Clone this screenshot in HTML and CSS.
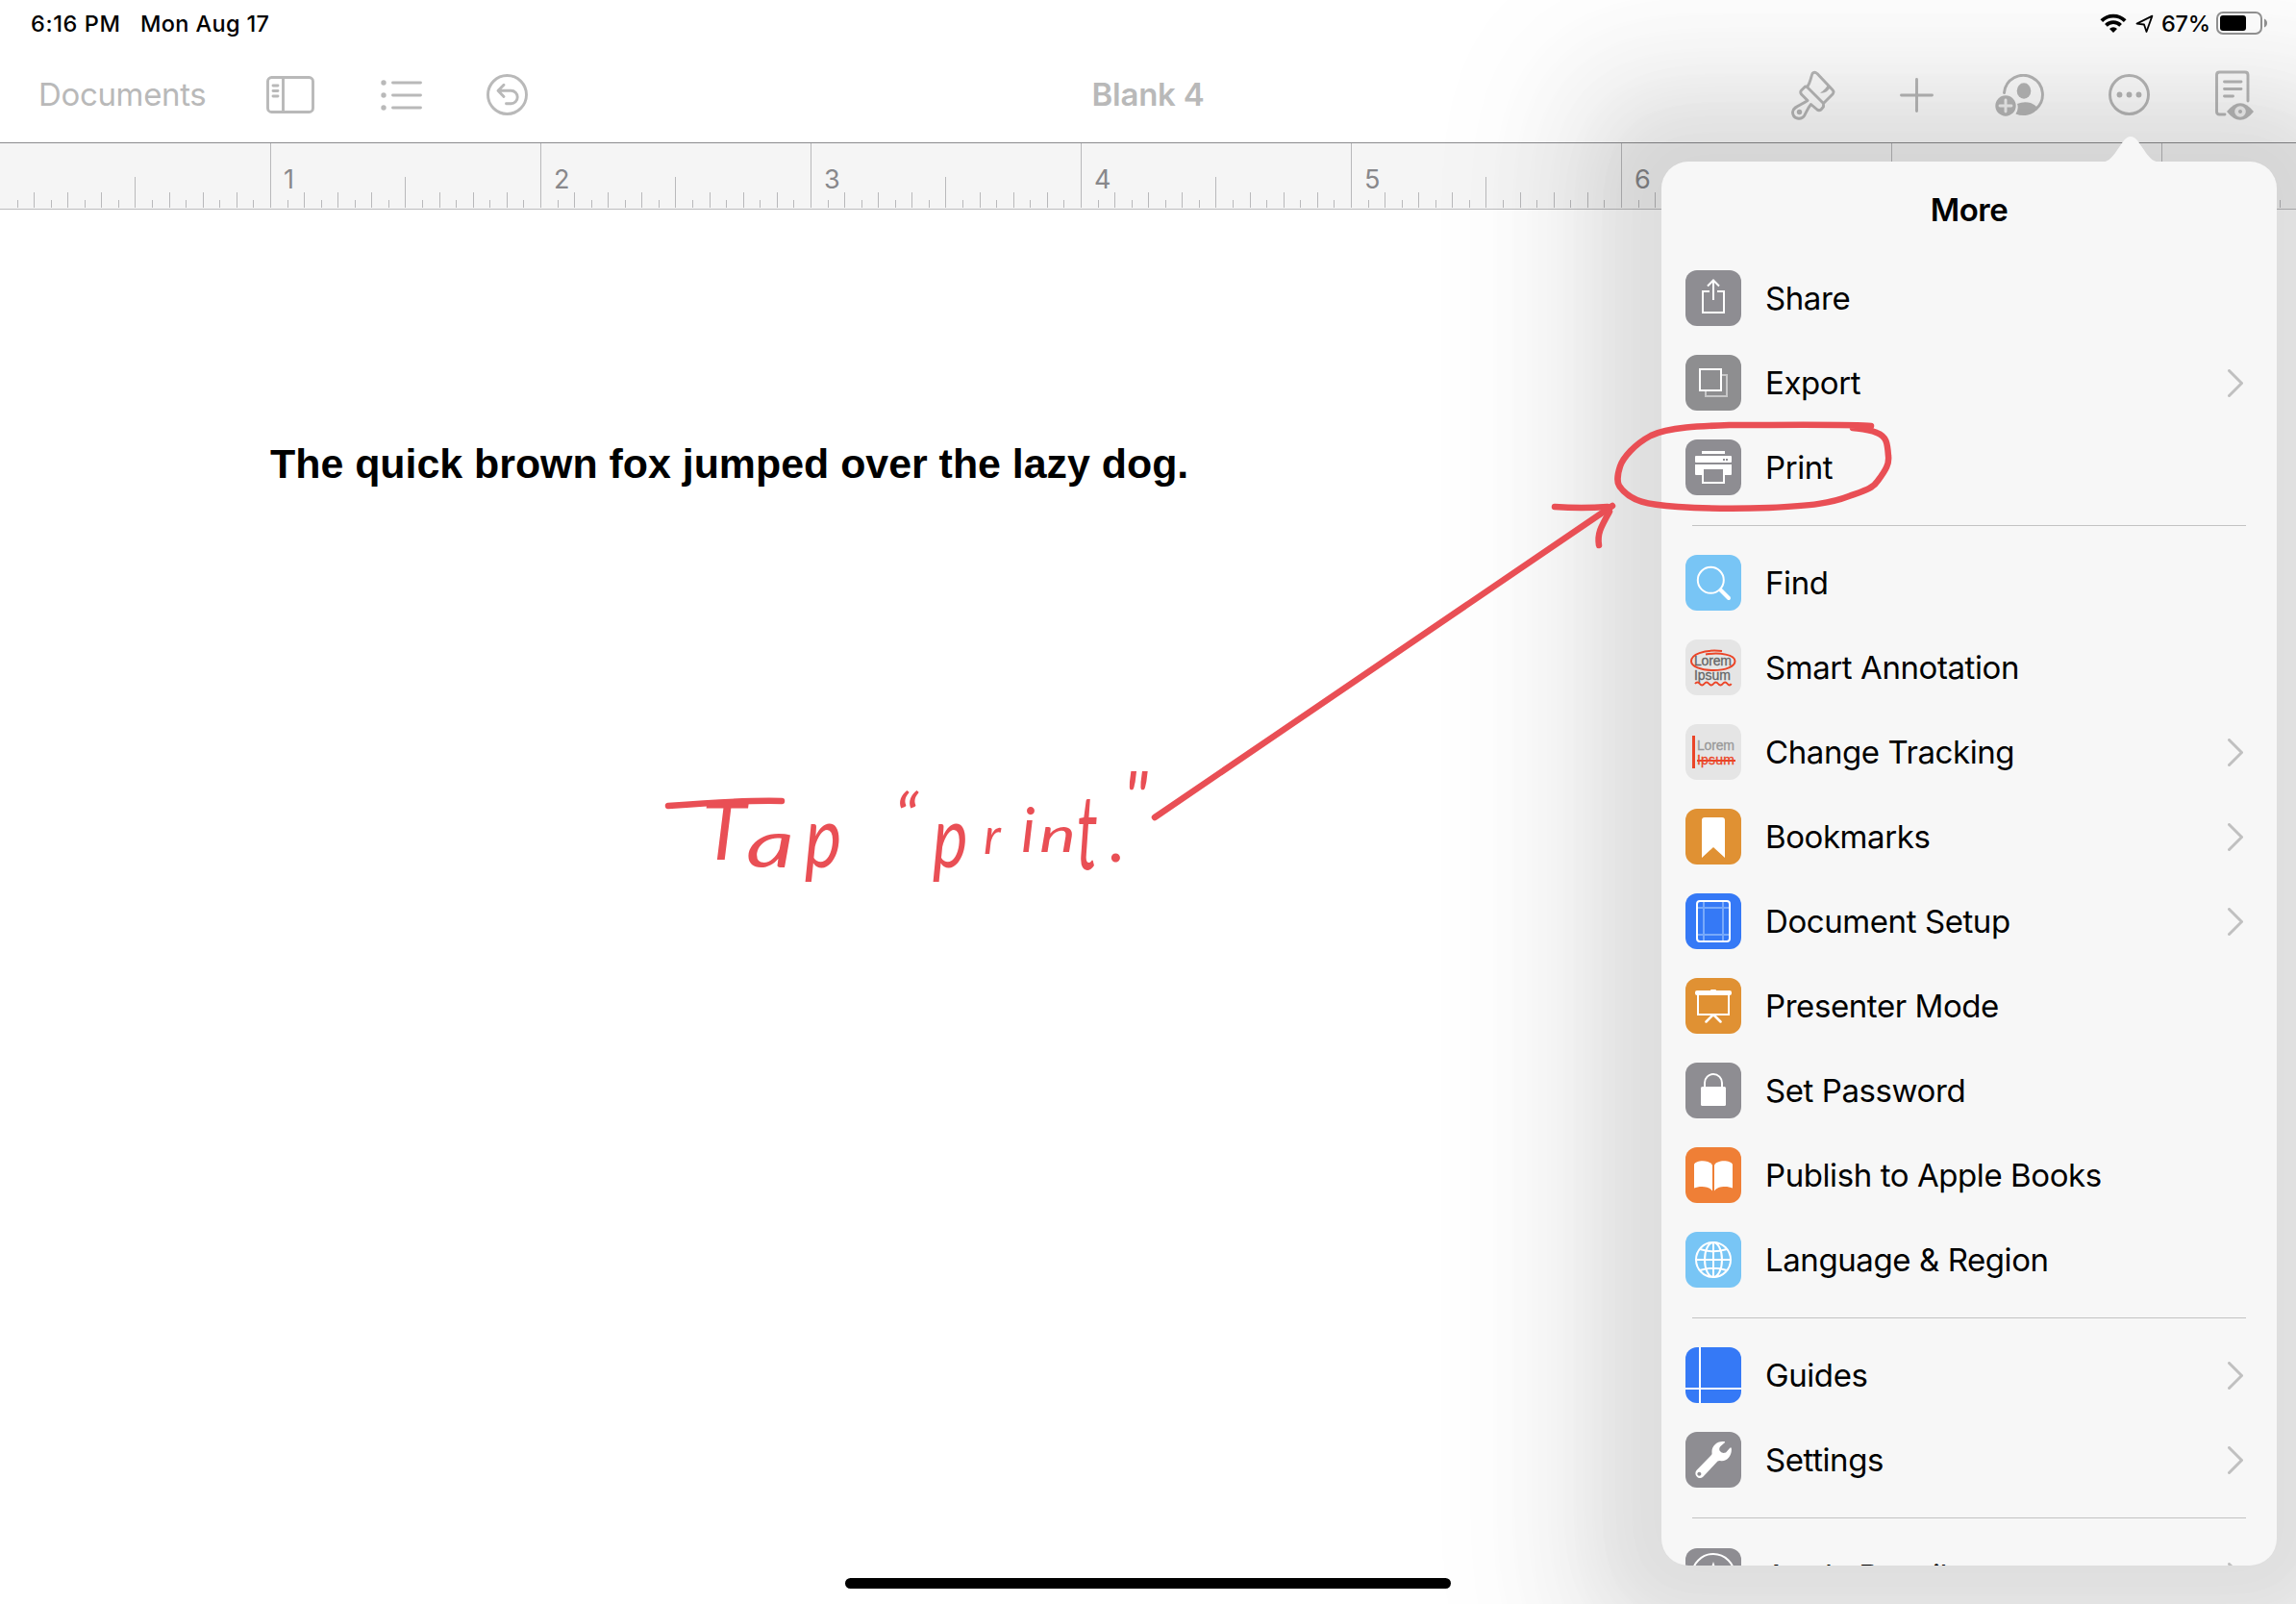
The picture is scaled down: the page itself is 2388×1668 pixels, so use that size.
FILE: index.html
```html
<!DOCTYPE html>
<html lang="en">
<head>
<meta charset="utf-8">
<title>Blank 4</title>
<link rel="stylesheet" href="styles.css">
</head>
<body>
<div class="screen">
  <div class="status">
    <span class="time">6:16 PM</span>
    <span class="date">Mon Aug 17</span>
    <svg class="wifi" width="28" height="21" viewBox="0 0 28 21"><g fill="none" stroke="#000" stroke-width="3.8"><path d="M1.8 7.6a17.3 17.3 0 0 1 24.4 0"/><path d="M6.4 12.3a10.8 10.8 0 0 1 15.2 0"/></g><path d="M14 20l-4-4a5.7 5.7 0 0 1 8 0z"/></svg>
    <svg class="loc" width="19" height="20" viewBox="0 0 19 20"><path d="M17.4 1.6L1.5 9.6 9 10.500 11.500 18z" fill="none" stroke="#000" stroke-width="1.8" stroke-linejoin="round"/></svg>
    <span class="pct">67%</span>
    <svg class="battery" width="54" height="24" viewBox="0 0 54 24"><rect x="1" y="1" width="46" height="22" rx="6" fill="none" stroke="#8f8f8f" stroke-width="2"/><rect x="4" y="4" width="27" height="16" rx="3"/><path d="M50 7.500q3 1.500 3 4.500t-3 4.500z" fill="#8f8f8f"/></svg>
  </div>

  <header class="toolbar">
    <nav class="tools-left">
      <span class="documents">Documents</span>
      <svg class="ico i-side" width="50" height="39" viewBox="0 0 50 39"><rect x="1.500" y="1.500" width="47" height="36" rx="4"/><path d="M17.500 1v37M7 10h5M7 15.500h5M7 21h5"/></svg>
      <svg class="ico i-list" width="43" height="32" viewBox="0 0 43 32"><path d="M12.500 3H41.500M12.500 16H41.500M12.500 29H41.500"/><g class="solid"><circle cx="3" cy="3" r="2.700"/><circle cx="3" cy="16" r="2.700"/><circle cx="3" cy="29" r="2.700"/></g></svg>
      <svg class="ico i-undo" width="43" height="43" viewBox="0 0 43 43"><circle cx="21.500" cy="21.500" r="20"/><path d="M18 11.300l-6 6 6 6.200M12.500 17.300H25.500a6.700 6.700 0 0 1 0 13.400H20.500"/></svg>
    </nav>
    <h1 class="doc-title">Blank 4</h1>
    <nav class="tools-right">
      <svg class="ico i-brush" width="46" height="52" viewBox="0 0 46 52"><path d="M22 3.500Q24 1 27 3.500L43 20.500Q45 22.500 43 25L33.500 34.500 16.500 17.500C20 13 20.500 7 22 3.500zM16.500 17.500L14.500 17 10.500 21Q9 22.500 10.500 25L17 31.500C11 36 1.500 38 1.500 43.500 1.500 51 10.500 52 13.500 47.500 16 43 17.500 39 20.500 35.500L27 41Q29 42.500 31 41L33.500 38V34.500"/><path class="solid" d="M38.500 14Q36 20 30 23.500 37 24.500 40.500 18z"/><circle class="solid" cx="8.500" cy="43.500" r="2.700"/></svg>
      <svg class="ico i-plus" width="35" height="36" viewBox="0 0 35 36"><path d="M17.500 1.500V34.500M1.500 18H33.500"/></svg>
      <svg class="ico i-person" width="52" height="44" viewBox="0 0 52 44"><path d="M9.500 19.500A20 20 0 1 1 42.500 36.500"/><ellipse class="solid" cx="30" cy="17.500" rx="7.300" ry="8.300"/><path class="solid" d="M23 31Q30 28 37 30 41 31.500 45 35.500A20 20 0 0 1 21.500 41.500Q25 36 23 31z"/><circle class="solid" cx="11" cy="33" r="10.700"/><path class="cross" d="M11 27v12M5 33h12"/></svg>
      <svg class="ico i-more" width="43" height="43" viewBox="0 0 43 43"><circle cx="21.500" cy="21.500" r="20"/><g class="solid"><circle cx="11.500" cy="21.500" r="2.900"/><circle cx="21.500" cy="21.500" r="2.900"/><circle cx="31.500" cy="21.500" r="2.900"/></g></svg>
      <svg class="ico i-read" width="40" height="52" viewBox="0 0 40 52"><path d="M10 46H4.500Q1.500 46 1.500 43V5Q1.500 2 4.500 2H31Q34 2 34 5V32M9.500 12H27M9.500 19.500H27M9.500 27H18.500"/><path class="solid" d="M12 43Q26 25.500 40 43 26 60.500 12 43z"/><circle class="hole" cx="26" cy="43" r="5.800"/><circle class="solid" cx="26" cy="43" r="2"/></svg>
    </nav>
  </header>

  <div class="ruler">
    <svg class="ticks" width="2388" height="68"><defs><pattern id="inch" width="281" height="68" patternUnits="userSpaceOnUse"><path fill="#b9b9bb" d="M0 0h1v67h-1zM18 59h1v8h-1zM35 51h1v16h-1zM53 59h1v8h-1zM70 51h1v16h-1zM88 59h1v8h-1zM105 51h1v16h-1zM123 59h1v8h-1zM140 35h1v32h-1zM158 59h1v8h-1zM176 51h1v16h-1zM193 59h1v8h-1zM211 51h1v16h-1zM228 59h1v8h-1zM246 51h1v16h-1zM263 59h1v8h-1z"/></pattern></defs><rect x="1" width="2387" height="68" fill="url(#inch)"/></svg>
    <div class="nums"><span></span><span>1</span><span>2</span><span>3</span><span>4</span><span>5</span><span>6</span><span>7</span><span>8</span></div>
  </div>

  <main class="page"><p class="line">The quick brown fox jumped over the lazy dog.</p></main>

  <section class="popover">
    <svg class="tip" width="66" height="27" viewBox="0 0 66 27"><path d="M0 27C9 27 13 23 19 14L26 4Q33 -4 40 4L47 14C53 23 57 27 66 27z"/></svg>
    <div class="sheet">
      <h2>More</h2>
      <div class="item"><svg class="tile gray" viewBox="0 0 58 58"><path class="w" d="M25 22H18V44H40V22H33M29 31V11M23 16.500L29 10.500 35 16.500"/></svg><span>Share</span></div>
      <div class="item"><svg class="tile gray2" viewBox="0 0 58 58"><path class="w" opacity=".5" d="M38 21H43V43H21V38"/><rect class="w" x="15" y="15" width="22" height="22"/></svg><span>Export</span><svg class="chev" viewBox="0 0 16 29"><path d="M1.500 1.500L14.500 14.500 1.500 27.500"/></svg></div>
      <div class="item"><svg class="tile gray" viewBox="0 0 58 58"><g fill="#fff"><rect x="17" y="12" width="24" height="3"/><rect x="10" y="17" width="38" height="7" rx="1"/><path d="M10 26H48V36q0 1-1 1H41V46H17V37H11q-1 0-1-1z"/></g><path fill="#8e8d92" d="M19 31h20v13h-20zM39 20h2v2h-2zM42 20h2v2h-2z"/></svg><span>Print</span></div>
      <hr>
      <div class="item"><svg class="tile sky" viewBox="0 0 58 58"><circle class="w" cx="26.300" cy="26.300" r="13.500"/><path class="w thick" d="M36.500 36.500L45 45"/></svg><span>Find</span></div>
      <div class="item"><svg class="tile pale" viewBox="0 0 58 58"><text class="mini" x="9" y="27" textLength="39">Lorem</text><text class="mini" x="9" y="42" textLength="38">Ipsum</text><path class="r" d="M38 12C18 10 6 16 6 22.500 6 28 16 32 29 32S51.500 28 51.500 22.500C51.500 16 36 13 21 15.500M10 46q2.400-3 4.800 0t4.800 0 4.800 0 4.800 0 4.800 0 4.800 0 4.800 0 4 0"/></svg><span>Smart Annotation</span></div>
      <div class="item"><svg class="tile pale" viewBox="0 0 58 58"><path fill="#eb4528" d="M7 12h3v34h-3z"/><text class="mini dim" x="12" y="27" textLength="39">Lorem</text><text class="mini red" x="12" y="42" textLength="39">Ipsum</text><path class="r" d="M12 38H52"/></svg><span>Change Tracking</span><svg class="chev" viewBox="0 0 16 29"><path d="M1.500 1.500L14.500 14.500 1.500 27.500"/></svg></div>
      <div class="item"><svg class="tile amber" viewBox="0 0 58 58"><path fill="#fff" d="M20 9H38Q41 9 41 12V51L29 40 17 51V12Q17 9 20 9z"/></svg><span>Bookmarks</span><svg class="chev" viewBox="0 0 16 29"><path d="M1.500 1.500L14.500 14.500 1.500 27.500"/></svg></div>
      <div class="item"><svg class="tile blue" viewBox="0 0 58 58"><path fill="none" stroke="#78a9fa" stroke-width="2" d="M19 8V50M39 8V50M12 15H46M12 43H46"/><rect class="w" x="12" y="8" width="34" height="42" rx="3"/></svg><span>Document Setup</span><svg class="chev" viewBox="0 0 16 29"><path d="M1.500 1.500L14.500 14.500 1.500 27.500"/></svg></div>
      <div class="item"><svg class="tile amber" viewBox="0 0 58 58"><rect x="10" y="13" width="38" height="5" rx="2" fill="#fff"/><rect x="26" y="12" width="6" height="3" rx="1" fill="#fff"/><path class="w" d="M13 17V38H45V17"/><path class="w legs" d="M28 39L21.500 45.500M30 39L36.500 45.500"/></svg><span>Presenter Mode</span></div>
      <div class="item"><svg class="tile gray" viewBox="0 0 58 58"><rect x="16" y="25" width="26" height="20" rx="1.500" fill="#fff"/><path class="w" d="M20 26V21a9 9 0 0 1 18 0V26"/></svg><span>Set Password</span></div>
      <div class="item"><svg class="tile orange" viewBox="0 0 58 58"><path fill="#fff" d="M9 18C11 13 26 13 28 19V45.500C25 40 14 40 9 42.500zM49 18C47 13 32 13 30 19V45.500C33 40 44 40 49 42.500z"/></svg><span>Publish to Apple Books</span></div>
      <div class="item"><svg class="tile sky" viewBox="0 0 58 58"><g class="w"><circle cx="29" cy="29" r="18"/><ellipse cx="29" cy="29" rx="9" ry="18"/><path d="M29 11V47M11 29H47M15 18Q29 22.500 43 18M15 40Q29 35.500 43 40"/></g></svg><span>Language &amp; Region</span></div>
      <hr>
      <div class="item"><svg class="tile blue" viewBox="0 0 58 58"><path class="w" d="M15 0V58M0 43H58"/></svg><span>Guides</span><svg class="chev" viewBox="0 0 16 29"><path d="M1.500 1.500L14.500 14.500 1.500 27.500"/></svg></div>
      <div class="item"><svg class="tile gray" viewBox="0 0 58 58"><path fill="#fff" fill-rule="evenodd" d="M40.500 10C33 9 27 14.500 27.500 21.500Q27.800 23 27 24L11.500 40C8 44 13.500 50.500 18 47L33.500 30.500Q34.500 29.800 36 30C43 31.500 48.500 24.500 47.800 17.500Q47.500 15.500 46 17L42 21.500Q37.500 23 35.500 19.500 34.500 16.500 37 14.500L40.500 11.500Q41.500 10.500 40.500 10zM14.300 41.800a2 2 0 1 0 .1 0z"/></svg><span>Settings</span><svg class="chev" viewBox="0 0 16 29"><path d="M1.500 1.500L14.500 14.500 1.500 27.500"/></svg></div>
      <hr>
      <div class="item last"><svg class="tile gray" viewBox="0 0 58 58"><circle class="w" cx="29" cy="28" r="22"/><path class="w" d="M23 34L29 17 35 34z"/></svg><span>Apple Pencil</span><svg class="chev" viewBox="0 0 16 29"><path d="M1.500 1.500L14.500 14.500 1.500 27.500"/></svg></div>
    </div>
  </section>

  <svg class="ink" width="2388" height="1668" viewBox="0 0 2388 1668">
    <g class="pen">
      <path d="M1946 443C1930 441 1850 442 1800 442 1770 443 1736 444 1717 453 1700 462 1688 476 1685 485 1682 494 1682 502 1684 505 1695 522 1715 525 1745 527 1775 529 1815 529 1840 528 1885 526 1905 523 1923 516 1940 510 1948 508 1953 500 1962 488 1965 482 1964 474 1963 460 1962 454 1952 450 1943 446 1936 446 1927 445"/>
      <path d="M1201 850L1677 526"/>
      <path d="M1617 527Q1645 529 1672 527M1674 532C1665 548 1661 555 1663 567"/>
      <path d="M695 838Q770 832 813 833"/>
    </g>
    <g class="hand">
      <text x="730" y="894" font-size="84">T</text>
      <text x="776" y="902" font-size="68" textLength="50" lengthAdjust="spacingAndGlyphs">a</text>
      <text transform="translate(837 902) scale(1.100 1.350)" font-size="66">p</text>
      <text x="930" y="877" font-size="72">“</text>
      <text transform="translate(970 902) scale(1.050 1.350)" font-size="66">p</text>
      <text x="1023" y="888" font-size="52">r</text>
      <text x="1062" y="886" font-size="64">i</text>
      <text x="1081" y="886" font-size="50" textLength="38" lengthAdjust="spacingAndGlyphs">n</text>
      <text transform="translate(1120 904) scale(.850 1.500)" font-size="72">t</text>
      <text x="1154" y="896" font-size="72">.</text>
      <text x="1168" y="856" font-size="76">"</text>
    </g>
  </svg>
  <div class="home"></div>
</div>
</body>
</html>
```
FILE: styles.css
```css
* { box-sizing: border-box; }
body { margin: 0; background: #fff; font-family: Inter, "Liberation Sans", sans-serif; }
h1, h2, p { margin: 0; }
svg { display: block; flex: none; }
.screen { position: relative; width: 2388px; height: 1668px; overflow: hidden; display: flex; flex-direction: column; }

.status { height: 48px; display: flex; align-items: center; padding: 0 29px 0 32px; font-size: 23.500px; font-weight: 500; color: #000; white-space: nowrap; position: relative; z-index: 2; }
.time { width: 114px; letter-spacing: .6px; }
.date { letter-spacing: .35px; }
.wifi { margin-left: auto; }
.loc { margin: 2px 0 0 9px; }
.pct { width: 65px; padding-left: 8px; letter-spacing: -.3px; }

.toolbar { height: 101px; display: grid; grid-template-columns: 1fr auto 1fr; align-items: center; border-bottom: 1px solid #8b8b8e; color: #b9b9b9; }
.tools-left, .tools-right { display: flex; align-items: center; }
.tools-left { padding-left: 40px; }
.tools-right { justify-content: flex-end; padding-right: 44px; }
.documents { width: 237px; font-size: 33px; letter-spacing: -.35px; }
.doc-title { font-size: 33px; font-weight: 600; letter-spacing: -.2px; }
.ico { fill: none; stroke: #b9b9b9; stroke-width: 2.900px; stroke-linecap: round; stroke-linejoin: round; margin-top: 1px; }
.ico .solid { fill: #b9b9b9; stroke: none; }
.ico .cross { stroke: #f3f3f3; }
.ico .hole { fill: #f3f3f3; stroke: none; }
.i-list { margin-left: 69px; }
.i-undo { margin-left: 67px; }
.i-plus { margin-left: 67px; }
.i-person { margin-left: 64px; }
.i-more { margin-left: 66px; }
.i-read { margin-left: 68px; }

.ruler { height: 69px; display: grid; background: #f5f5f5; border-bottom: 1px solid #bcbcbe; }
.ticks, .nums { grid-area: 1 / 1; }
.nums { display: grid; grid-template-columns: repeat(9, 281px); align-items: center; padding-top: 7px; overflow: hidden; color: #88888b; font-size: 27px; }
.nums span { padding-left: 14px; }

.page { flex: 1; padding: 238px 281px 0; }
.line { font: bold 42.880px/52px "Liberation Sans", Arial, sans-serif; color: #000; white-space: nowrap; }

.popover { position: absolute; left: 1728px; top: 168px; width: 640px; height: 1460px; border-radius: 28px; background: #f7f7f7; box-shadow: 0 0 70px 55px rgba(0, 5, 3, .048), 0 0 100px 100px rgba(0, 5, 3, .056), 0 0 140px 145px rgba(0, 5, 3, .036); }
.tip { position: absolute; left: 455px; top: -26px; fill: #f7f7f7; }
.sheet { height: 100%; overflow: hidden; border-radius: 28px; }
.sheet h2 { height: 98px; padding-top: 30px; line-height: 40px; font-size: 33px; font-weight: 600; letter-spacing: -.5px; text-align: center; }
.item { height: 88px; display: flex; align-items: center; padding: 0 35px 0 25px; font-size: 33px; letter-spacing: -.42px; color: #000; white-space: nowrap; }
.item.last { margin-top: 1px; }
.item span { flex: 1; padding-left: 25px; }
.sheet hr { height: 32px; margin: 0 32px; border: 0; background: linear-gradient(#c3c3c3, #c3c3c3) 0 16px / 100% 1px no-repeat; }
.chev { width: 16px; height: 29px; fill: none; stroke: #c0c0c0; stroke-width: 3px; stroke-linecap: round; stroke-linejoin: round; }
.tile { width: 58px; height: 58px; border-radius: 12px; }
.w { fill: none; stroke: #fff; stroke-width: 2px; }
.w.thick { stroke-width: 4px; stroke-linecap: round; }
.w.legs { stroke-width: 2.500px; stroke-linecap: round; }
.r { fill: none; stroke: #eb4528; stroke-width: 2px; }
.gray { background: #8e8d92; }
.gray2 { background: #8e8e90; }
.sky { background: #78c5f5; }
.pale { background: #e5e5e5; }
.amber { background: #e09133; }
.blue { background: #3579f6; }
.orange { background: #ef7f36; }
.mini { font: 14px "Liberation Sans", Arial, sans-serif; letter-spacing: 0; fill: #666; stroke: #666; stroke-width: .3px; }
.mini.dim { fill: #999; stroke: #999; }
.mini.red { fill: #eb4528; stroke: #eb4528; }

.ink { position: absolute; left: 0; top: 0; pointer-events: none; }
.pen { fill: none; stroke: #e94f55; stroke-width: 6.500px; stroke-linecap: round; stroke-linejoin: round; }
.hand { fill: #e94f55; font-family: Lato, sans-serif; font-style: italic; font-weight: 400; }
.home { position: absolute; left: 879px; top: 1641px; width: 630px; height: 11px; border-radius: 6px; background: #000; }
```
